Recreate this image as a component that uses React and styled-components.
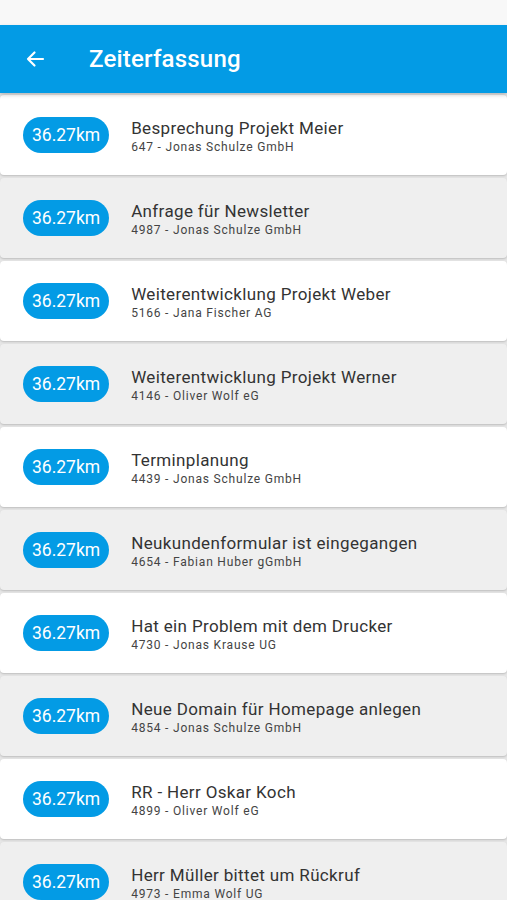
import React from "react";
import styled, { createGlobalStyle } from "styled-components";

const entries = [
  { title: "Besprechung Projekt Meier", sub: "647 - Jonas Schulze GmbH" },
  { title: "Anfrage für Newsletter", sub: "4987 - Jonas Schulze GmbH" },
  { title: "Weiterentwicklung Projekt Weber", sub: "5166 - Jana Fischer AG" },
  { title: "Weiterentwicklung Projekt Werner", sub: "4146 - Oliver Wolf eG" },
  { title: "Terminplanung", sub: "4439 - Jonas Schulze GmbH" },
  { title: "Neukundenformular ist eingegangen", sub: "4654 - Fabian Huber gGmbH" },
  { title: "Hat ein Problem mit dem Drucker", sub: "4730 - Jonas Krause UG" },
  { title: "Neue Domain für Homepage anlegen", sub: "4854 - Jonas Schulze GmbH" },
  { title: "RR - Herr Oskar Koch", sub: "4899 - Oliver Wolf eG" },
  { title: "Herr Müller bittet um Rückruf", sub: "4973 - Emma Wolf UG" },
];

export default function App() {
  return (
    <>
      <GlobalStyle />
      <Screen>
        <StatusBar />
        <AppBar>
          <BackButton aria-label="Zurück">
            <svg width="24" height="24" viewBox="0 0 24 24" fill="none">
              <path
                d="M20 12H5M11.5 5.5L5 12l6.5 6.5"
                stroke="#fff"
                strokeWidth="2.2"
                strokeLinecap="round"
                strokeLinejoin="round"
              />
            </svg>
          </BackButton>
          <Title>Zeiterfassung</Title>
        </AppBar>
        <List>
          {entries.map((e, i) => (
            <Card key={i} $alt={i % 2 === 1}>
              <Distance>36.27km</Distance>
              <Info>
                <EntryTitle>{e.title}</EntryTitle>
                <EntrySub>{e.sub}</EntrySub>
              </Info>
            </Card>
          ))}
        </List>
      </Screen>
    </>
  );
}

const GlobalStyle = createGlobalStyle`
  html, body {
    margin: 0;
    padding: 0;
    background: #e9e9e9;
    font-family: Roboto, "Noto Sans", sans-serif;
  }
`;

const Screen = styled.div`
  width: 507px;
  height: 900px;
  overflow: hidden;
  display: flex;
  flex-direction: column;
  background: #e6e6e6;
`;

const StatusBar = styled.div`
  height: 25px;
  flex-shrink: 0;
  background: #f8f8f8;
`;

const AppBar = styled.header`
  height: 68px;
  flex-shrink: 0;
  background: #039be5;
  display: flex;
  align-items: center;
  box-shadow: 0 2px 4px rgba(0, 0, 0, 0.2);
  position: relative;
  z-index: 1;
`;

const BackButton = styled.button`
  width: 24px;
  height: 24px;
  margin-left: 23px;
  padding: 0;
  border: none;
  background: transparent;
  display: flex;
  align-items: center;
  justify-content: center;
`;

const Title = styled.h1`
  margin: 0 0 0 42px;
  color: #fff;
  font-size: 24px;
  font-weight: 500;
  letter-spacing: 0.2px;
`;

const List = styled.div`
  display: flex;
  flex-direction: column;
  gap: 3px;
  padding-top: 2px;
`;

const Card = styled.div`
  height: 80px;
  flex-shrink: 0;
  display: flex;
  align-items: center;
  padding-left: 23px;
  border-radius: 4px;
  background: ${(p) => (p.$alt ? "#efefef" : "#ffffff")};
  box-shadow: 0 1px 2px rgba(0, 0, 0, 0.18);
`;

const Distance = styled.span`
  height: 36px;
  padding: 0 9px;
  border-radius: 18px;
  background: #039be5;
  color: #fff;
  font-size: 17.5px;
  display: flex;
  align-items: center;
  flex-shrink: 0;
`;

const Info = styled.div`
  margin-left: 22px;
  display: flex;
  flex-direction: column;
  margin-top: 3px;
`;

const EntryTitle = styled.span`
  font-size: 17px;
  line-height: 21px;
  color: #333;
  letter-spacing: 0.35px;
`;

const EntrySub = styled.span`
  font-size: 12px;
  line-height: 16px;
  color: #444;
  letter-spacing: 0.8px;
`;
